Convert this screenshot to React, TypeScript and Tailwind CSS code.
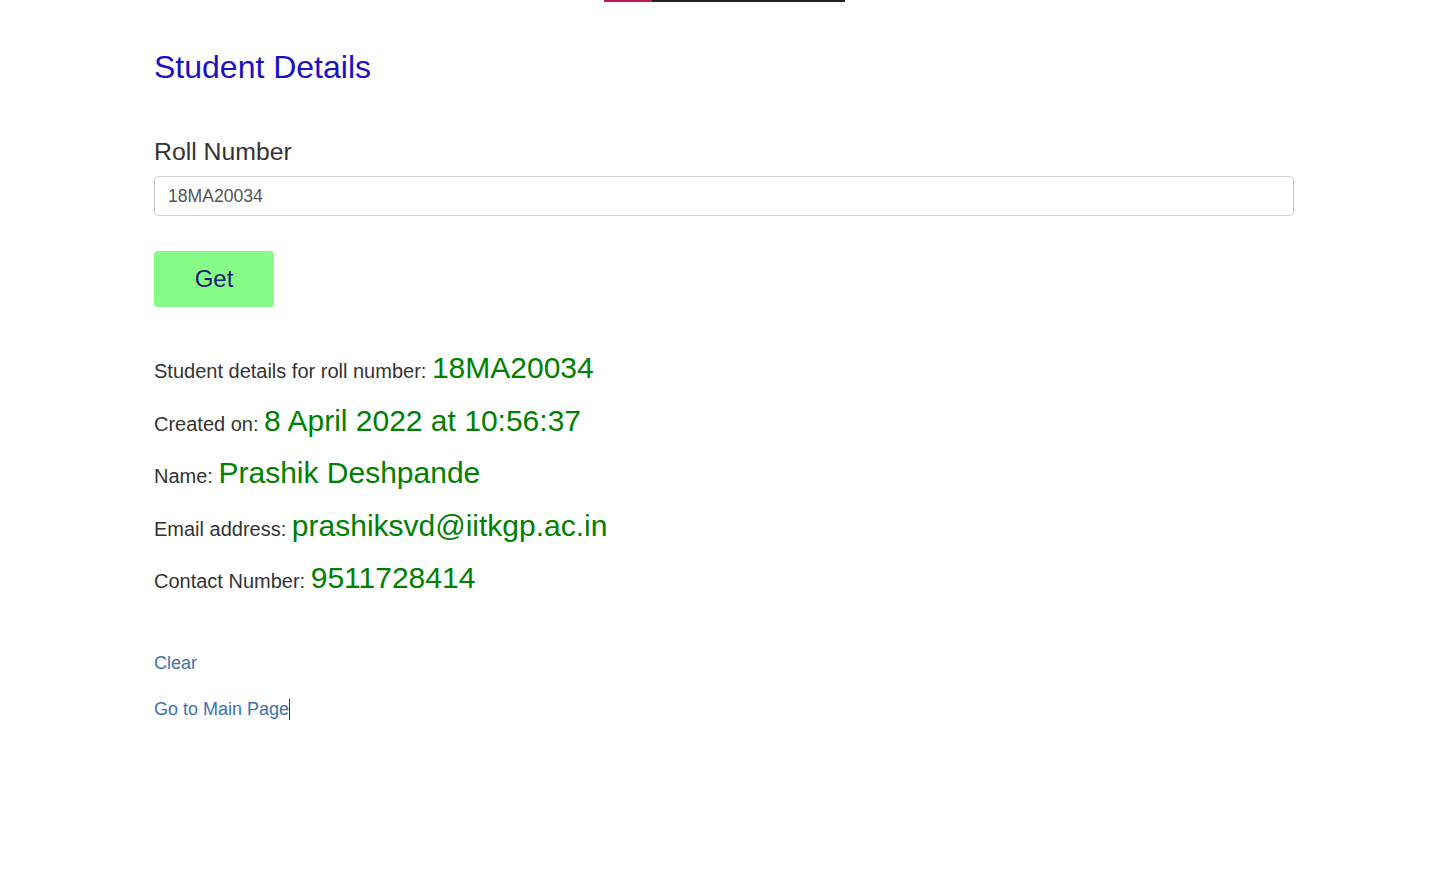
export default function App() {
  const rows: [string, string][] = [
    ["Student details for roll number:", "18MA20034"],
    ["Created on:", "8 April 2022 at 10:56:37"],
    ["Name:", "Prashik Deshpande"],
    ["Email address:", "prashiksvd@iitkgp.ac.in"],
    ["Contact Number:", "9511728414"],
  ];

  return (
    <div
      className="min-h-screen bg-white"
      style={{ fontFamily: '"Liberation Sans", Arial, sans-serif' }}
    >
      {/* progress strip at the very top */}
      <div className="ml-[604px] flex h-[2px] w-[241px]">
        <div className="w-[48px] bg-[#c2185b]" />
        <div className="flex-1 bg-[#222]" />
      </div>

      <div className="ml-[154px] flex w-[1140px] flex-col">
        <h2 className="mt-[47px] text-[32px] leading-[36px] text-[#1a10c4]">
          Student Details
        </h2>

        <label className="mt-[52px] text-[24.8px] leading-[30px] text-[#333]">
          Roll Number
        </label>
        <input
          readOnly
          value="18MA20034"
          className="mt-[9px] h-[40px] w-full rounded-[4px] border border-[#ccc] px-[13px] text-[17.6px] text-[#555] outline-none"
        />

        <button className="mt-[35px] h-[56px] w-[120px] rounded-[4px] bg-[#86fc86] text-[24px] text-[#1b1b7a]">
          Get
        </button>

        <div className="mt-[43px] flex flex-col gap-[16.5px]">
          {rows.map(([label, value]) => (
            <div key={label} className="flex h-[36px] items-baseline leading-[36px]">
              <span className="text-[20px] leading-[36px] text-[#333]">{label}&nbsp;</span>
              <span className="text-[30px] leading-[36px] text-[#008000]">{value}</span>
            </div>
          ))}
        </div>

        <a className="mt-[55px] w-fit text-[18px] leading-[24px] text-[#3d72b0]">
          Clear
        </a>
        <div className="mt-[22px] flex items-center text-[18px] leading-[24px] text-[#3d72b0]">
          <a>Go to Main Page</a>
          <span className="inline-block h-[21px] w-px bg-[#1b2a4a]" />
        </div>
      </div>
    </div>
  );
}
